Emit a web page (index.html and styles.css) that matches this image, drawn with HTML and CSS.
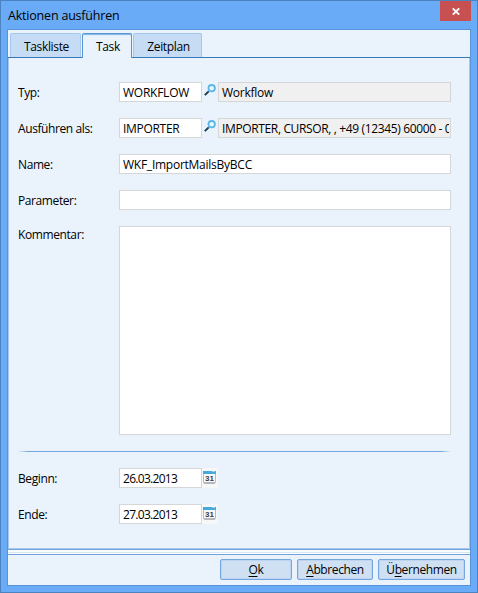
FILE: index.html
```html
<!DOCTYPE html>
<html lang="de">
<head>
<meta charset="utf-8">
<title>Aktionen ausführen</title>
<link rel="stylesheet" href="styles.css">
</head>
<body>
<div class="window">
  <header class="titlebar">
    <h1>Aktionen ausführen</h1>
    <button class="close" aria-label="Schließen"><svg width="8" height="7" viewBox="0 0 8 7"><path d="M.8 .3L7.2 6.7M7.2 .3L.8 6.7" stroke="#fff" stroke-width="1.8"/></svg></button>
  </header>
  <main class="client">
    <nav class="tabs">
      <div class="tab tab-list">Taskliste</div>
      <div class="tab active">Task</div>
      <div class="tab tab-plan">Zeitplan</div>
    </nav>
    <section class="page">
      <div class="row"><label>Typ:</label><div class="field short">WORKFLOW</div><span class="lookup"><svg width="12" height="12" viewBox="0 0 12 12"><path d="M.8 11.2L4.7 7.3" stroke="#17384e" stroke-width="1.9"/><circle cx="7.7" cy="4.2" r="3.2" fill="#eaf6fd" stroke="#5ab7e3" stroke-width="1.8"/></svg></span><div class="field readonly">Workflow</div></div>
      <div class="row"><label>Ausführen als:</label><div class="field short importer">IMPORTER</div><span class="lookup"><svg width="12" height="12" viewBox="0 0 12 12"><path d="M.8 11.2L4.7 7.3" stroke="#17384e" stroke-width="1.9"/><circle cx="7.7" cy="4.2" r="3.2" fill="#eaf6fd" stroke="#5ab7e3" stroke-width="1.8"/></svg></span><div class="field readonly contact"><span>IMPORTER, CURSOR, , +49 (12345) 60000 - 0</span></div></div>
      <div class="row"><label>Name:</label><div class="field">WKF_ImportMailsByBCC</div></div>
      <div class="row"><label>Parameter:</label><div class="field"></div></div>
      <div class="row comment"><label>Kommentar:</label><div class="field"></div></div>
      <div class="separator"></div>
      <div class="row"><label>Beginn:</label><div class="field short date">26.03.2013</div><span class="pick"><svg width="13" height="14" viewBox="0 0 13 14"><rect x=".5" y="1.5" width="12" height="11.5" rx="1" fill="#fafafa" stroke="#b7bbbf"/><path d="M0 1h13v3H0z" fill="#45a9dc"/><path d="M9 1h3v1H9z" fill="#94d3f1"/><path d="M1 13h11" stroke="#92979b"/><text x="6.5" y="11" text-anchor="middle">31</text></svg></span></div>
      <div class="row"><label>Ende:</label><div class="field short date">27.03.2013</div><span class="pick"><svg width="13" height="14" viewBox="0 0 13 14"><rect x=".5" y="1.5" width="12" height="11.5" rx="1" fill="#fafafa" stroke="#b7bbbf"/><path d="M0 1h13v3H0z" fill="#45a9dc"/><path d="M9 1h3v1H9z" fill="#94d3f1"/><path d="M1 13h11" stroke="#92979b"/><text x="6.5" y="11" text-anchor="middle">31</text></svg></span></div>
    </section>
    <div class="divider"></div>
    <footer class="actions">
      <button class="btn ok"><span><u>O</u>k</span></button>
      <button class="btn cancel"><span><u>A</u>bbrechen</span></button>
      <button class="btn apply"><span>Ü<u>b</u>ernehmen</span></button>
    </footer>
  </main>
</div>
</body>
</html>
```
FILE: styles.css
```css
* { box-sizing: border-box; }
body { margin: 0; font: 12px/18px "Open Sans", "Noto Sans", sans-serif; color: #000; letter-spacing: -.25px; }
button { font: inherit; color: inherit; letter-spacing: inherit; padding: 0; }
svg { display: block; }
.window { width: 478px; height: 593px; border: 1px solid #4b83c0; background: #6aabf7; padding: 0 6px; }
.titlebar { height: 28px; display: flex; justify-content: space-between; align-items: flex-start; }
.titlebar h1 { margin: 5px 0 0 1px; font-size: 12.5px; font-weight: 400; line-height: 19px; letter-spacing: -.2px; }
.close { width: 31px; height: 20px; border: 0; background: #c75050; display: flex; align-items: center; justify-content: center; }
.client { height: 557px; border: 1px solid #5693d9; background: #eaf3fb; display: flex; flex-direction: column; }
.tabs { height: 28px; padding: 3px 0 0 2px; border-bottom: 1px solid #3579b8; display: flex; gap: 1px; letter-spacing: -.35px; }
.tab { height: 24px; padding: 4px 0 0 2px; text-align: center; background: #c5dcf4; border: 1px solid #a6c8ec; border-bottom: 0; border-radius: 2px 2px 0 0; }
.tab-list { width: 71px; }
.tab-plan { width: 69px; }
.tab.active { width: 50px; height: 25px; background: #eaf3fb; border-color: #5595d4; box-shadow: inset 0 1px #8db9e7, inset 0 2px #dceafa; }
.page { height: 491px; border: solid #a9c9ec; border-width: 0 1px 1px; padding: 24px 18px 0 9px; }
.row { display: flex; height: 20px; margin-bottom: 16px; }
label { width: 101px; flex: none; padding-top: 2px; letter-spacing: -.4px; }
.field { flex: 1; min-width: 0; height: 20px; border: 1px solid #d5d6d8; background: #fff; padding: 1px 3px; white-space: nowrap; overflow: hidden; }
.field.short { flex: none; width: 83px; }
.field.importer { letter-spacing: -.3px; }
.field.date { letter-spacing: -.7px; }
.field.readonly { background: #f0f0f0; }
.contact { letter-spacing: -.36px; padding-right: 1px; }
.contact span { display: block; overflow: hidden; }
.lookup { width: 16px; padding: 2px 0 0 2px; }
.comment { height: 209px; }
.comment .field { height: 209px; }
.comment label { padding-top: 0; }
.separator { height: 1px; margin-bottom: 16px; background: linear-gradient(90deg, transparent, #75a6de 10px, #75a6de calc(100% - 10px), transparent); }
.pick { width: 16px; height: 20px; background: #f5f7f9; padding: 2px 0 0 1px; }
.pick text { font: bold 8px/1 "Liberation Sans", sans-serif; letter-spacing: 0; fill: #3c3c3c; }
.divider { height: 6px; background: linear-gradient(#6fa3de 0 1px, #f8fbff 1px 3px, #d9e6f3 3px 4px, #fff 4px 5px, #6fa3de 5px 6px); }
.actions { display: flex; justify-content: flex-end; gap: 5px; padding: 4px 5px 0 0; }
.btn { height: 21px; border: 1px solid #75a6de; border-radius: 2px; background: #cfe0f3; box-shadow: inset 0 0 0 1px #bdd5f0; line-height: 18px; letter-spacing: -.4px; }
.btn u { text-underline-offset: 2px; text-decoration-thickness: 1px; }
.ok { width: 72px; }
.cancel { width: 76px; }
.apply { width: 87px; }
```
